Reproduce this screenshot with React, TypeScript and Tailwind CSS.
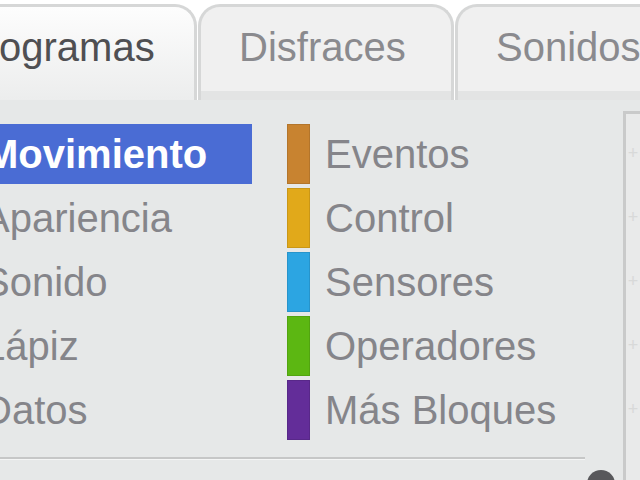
import React from 'react';

const left = ['Movimiento', 'Apariencia', 'Sonido', 'Lápiz', 'Datos'];
const right = [
  { name: 'Eventos', color: 'bg-[#c88330]' },
  { name: 'Control', color: 'bg-[#e1a91a]' },
  { name: 'Sensores', color: 'bg-[#2ca5e2]' },
  { name: 'Operadores', color: 'bg-[#5cb712]' },
  { name: 'Más Bloques', color: 'bg-[#632d99]' },
];

const Tab: React.FC<{ label: string; active?: boolean; className?: string }> = ({ label, active, className }) => (
  <div
    className={
      'h-[96px] shrink-0 rounded-t-[22px] border-x-[3px] border-t-[3px] border-[#d6d7d7] px-[38px] pb-[14px] flex items-center ' +
      (active
        ? 'bg-gradient-to-b from-[#fdfdfd] to-[#eceded] text-[#4f4f52] '
        : 'bg-[#f0f0f0] text-[#8a8a8e] shadow-[inset_0_-9px_0_#e3e4e4] ') +
      (className ?? '')
    }
  >
    <span className="text-[40px] leading-none">{label}</span>
  </div>
);

export default function App() {
  return (
    <div className="w-[640px] h-[480px] overflow-hidden bg-[#e6e8e8] font-['Liberation_Sans',Arial,sans-serif]">
      {/* tabs */}
      <div className="h-[100px] bg-white pt-[4px] flex ml-[-82px]">
        <Tab label="Programas" active className="w-[279px]" />
        <Tab label="Disfraces" className="w-[256px] ml-[1px]" />
        <Tab label="Sonidos" className="w-[260px] ml-[1px]" />
      </div>

      <div className="flex">
        {/* palette categories */}
        <div className="w-[623px] shrink-0 pt-[24px]">
          <div className="flex">
            <div className="w-[317px] shrink-0 ml-[-30px] flex flex-col gap-[4px]">
              {left.map((n, i) => (
                <div
                  key={n}
                  className={
                    'h-[60px] w-[282px] flex items-center text-[40px] leading-none ' +
                    (i === 0 ? 'bg-[#4a6cd4] text-white font-bold pl-[15px]' : 'text-[#85858a] pl-[13px]')
                  }
                >
                  {n}
                </div>
              ))}
            </div>
            <div className="flex flex-col gap-[4px]">
              {right.map((c) => (
                <div key={c.name} className="h-[60px] flex items-center">
                  <div className={'w-[23px] h-[60px] border border-black/10 ' + c.color} />
                  <span className="ml-[15px] text-[40px] leading-none text-[#85858a]">{c.name}</span>
                </div>
              ))}
            </div>
          </div>
          <div className="mt-[17px] w-[585px] h-[2px] bg-[#c6c7c7] border-b border-[#f4f5f5] box-content" />
          <div className="mt-[10px] ml-[587px] w-[28px] h-[28px] rounded-full bg-[#58585b]" />
        </div>

        {/* scripts area */}
        <div className="mt-[11px] flex-1 h-[400px] border-l-[3px] border-t-[3px] border-[#c9caca] bg-[#e9eaea] flex flex-col items-center text-[#d8d9d9] text-[18px] leading-none">
          <span className="mt-[30px]">+</span>
          <span className="mt-[46px]">+</span>
          <span className="mt-[46px]">+</span>
          <span className="mt-[46px]">+</span>
          <span className="mt-[46px]">+</span>
        </div>
      </div>
    </div>
  );
}
